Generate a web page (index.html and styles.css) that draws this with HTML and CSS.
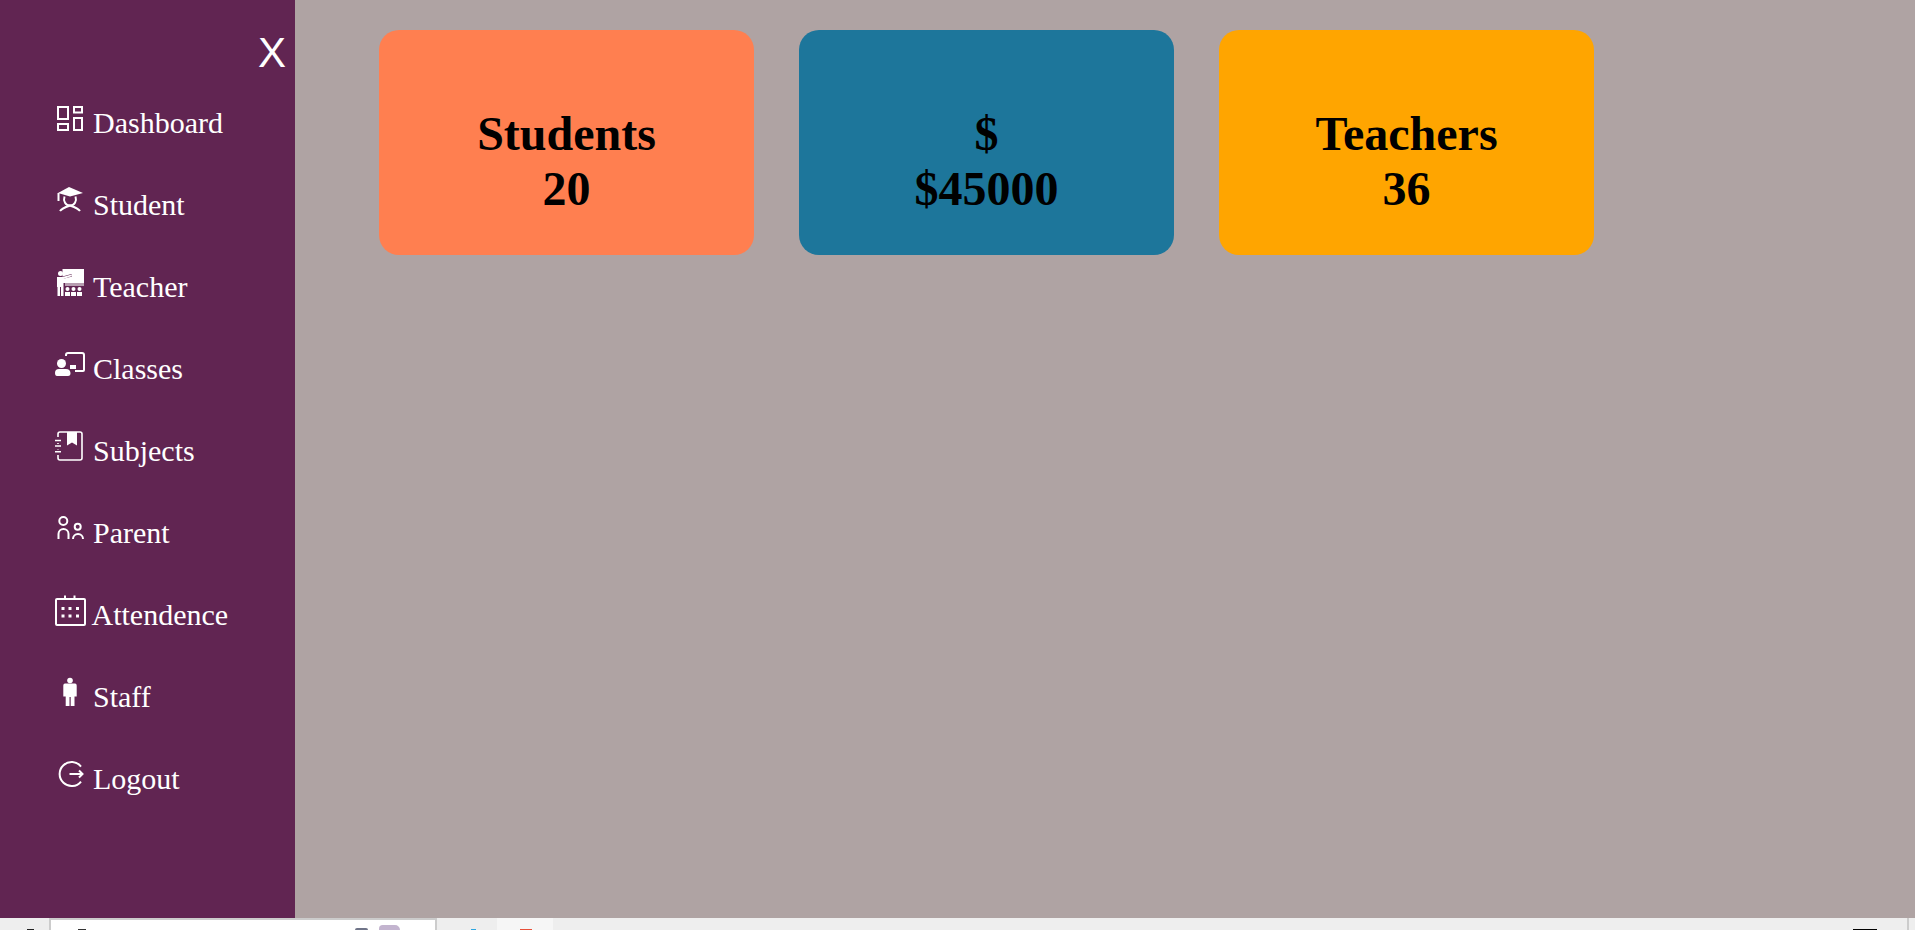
FILE: index.html
```html
<!DOCTYPE html>
<html lang="en">
<head>
<meta charset="utf-8">
<title>Dashboard</title>
<link rel="stylesheet" href="styles.css">
</head>
<body>
<div class="app">
  <aside class="sidebar">
    <div class="close">X</div>
    <nav class="nav">
      <a class="nav-item">
        <svg class="nav-icon" viewBox="0 0 43 34"><rect class="ln" x="8" y="1" width="10" height="12"/><rect class="ln" x="24" y="1" width="8" height="5.5"/><rect class="ln" x="8" y="18" width="10" height="6"/><rect class="ln" x="24" y="12" width="8" height="12"/></svg>
        <span>Dashboard</span>
      </a>
      <a class="nav-item">
        <svg class="nav-icon" viewBox="0 0 43 34"><path class="fl" d="M19 -1 33 5 20 8.500 8 5Z"/><path class="ln" d="M8.500 5V13"/><path class="ln" d="M14.500 8.500C13 13 15.500 17.500 20 17.500S27 13 25.500 8.500"/><path class="ln" d="M10 23C12 20 17 18.500 20 17.500C23 18.500 28 20 30 23"/></svg>
        <span>Student</span>
      </a>
      <a class="nav-item">
        <svg class="nav-icon" viewBox="0 0 43 34"><path class="fl" d="M12.500 -1H34V13H12.500V9L22 6.500 21.500 4 12.500 6.500Z"/><rect class="dim" x="15" y="13" width="19" height="3"/><circle class="fl" cx="10.500" cy="3.500" r="2.500"/><path class="fl" d="M7 7 12.500 7 21.500 4.500 22 6 13.500 9V26H11V17H10V26H7.500V17H7Z"/><circle class="fl" cx="17.500" cy="19" r="2"/><circle class="fl" cx="23.500" cy="19" r="2"/><circle class="fl" cx="29.500" cy="19" r="2"/><path class="fl" d="M15 22H20V26H15ZM21 22H26V26H21ZM27 22H32V26H27Z"/></svg>
        <span>Teacher</span>
      </a>
      <a class="nav-item">
        <svg class="nav-icon" viewBox="0 0 43 34"><path class="ln" d="M16 4V3Q16 1 18 1H32Q34 1 34 3V18Q34 19 33 19H25"/><path class="fl" d="M20 13H26V17H20Z"/><circle class="fl" cx="11.500" cy="11.500" r="4.500"/><path class="fl" d="M5 21Q5 17 9 17H16Q20 17 20.500 21Q20.500 24 18 24H7Q5 24 5 21Z"/></svg>
        <span>Classes</span>
      </a>
      <a class="nav-item">
        <svg class="nav-icon" viewBox="0 0 43 34"><path class="thin" d="M8 3V0Q8 -2 10 -2H30Q32 -2 32 0V24Q32 26 30 26H10Q8 26 8 24V21"/><path class="thin" d="M8 9V10M8 15V15.500"/><path class="fl" d="M17 -2H27V11.500L22 8.500 17 11.500Z"/><path class="thin" d="M5 6.500H11M5 12H11M5 17.700H11"/></svg>
        <span>Subjects</span>
      </a>
      <a class="nav-item">
        <svg class="nav-icon" viewBox="0 0 43 34"><circle class="ln" cx="13.300" cy="5" r="4"/><path class="ln" d="M8.500 23V18A5 5 0 0 1 18.500 18V23"/><circle class="ln" cx="27.700" cy="10.700" r="3"/><path class="ln" d="M23 23A5 5 0 0 1 33 23"/></svg>
        <span>Parent</span>
      </a>
      <a class="nav-item item-tight">
        <svg class="nav-icon" viewBox="0 0 43 34"><rect class="ln" x="6" y="1" width="29" height="26" rx="1"/><path class="ln" d="M15 -2.500V2M24.500 -2.500V2"/><path class="fl" d="M11.500 9H14.500V12H11.500ZM18.500 9H21.500V12H18.500ZM26 9H29V12H26ZM11.500 16.500H14.500V19.500H11.500ZM18.500 16.500H21.500V19.500H18.500ZM26 16.500H29V19.500H26Z"/></svg>
        <span>Attendence</span>
      </a>
      <a class="nav-item">
        <svg class="nav-icon" viewBox="0 0 43 34"><circle class="fl" cx="20" cy="0.500" r="2.800"/><path class="fl" d="M15 3.500H25Q26.700 3.500 26.700 5.500V16.500H24.500V26H20.700V17H19.500V26H15.700V16.500H13.300V5.500Q13.300 3.500 15 3.500Z"/></svg>
        <span>Staff</span>
      </a>
      <a class="nav-item">
        <svg class="nav-icon" viewBox="0 0 43 34"><path class="ln" d="M31 4.500A12 12 0 1 0 31 19.500"/><path class="ln" d="M19.500 12H32M29 8.500 32.500 12 29 15.500"/></svg>
        <span>Logout</span>
      </a>
    </nav>
  </aside>
  <main class="main">
    <div class="card card-coral"><div>Students</div><div>20</div></div>
    <div class="card card-blue"><div>$</div><div>$45000</div></div>
    <div class="card card-orange"><div>Teachers</div><div>36</div></div>
  </main>
</div>
<footer class="taskbar">
  <i class="bit bit-start"></i>
  <div class="search">
    <i class="bit bit-lens"></i>
    <i class="bit bit-gray"></i>
    <i class="bit bit-lilac"></i>
  </div>
  <i class="bit bit-blue"></i>
  <div class="tab"><i class="bit bit-red"></i></div>
  <i class="bit bit-tray"></i>
  <i class="divider"></i>
</footer>
</body>
</html>
```

FILE: styles.css
```css
* {
  box-sizing: border-box;
}

html,
body {
  margin: 0;
  height: 100%;
  overflow: hidden;
}

body {
  display: flex;
  flex-direction: column;
  font-family: "Liberation Serif", "Times New Roman", serif;
  background: #eeeeee;
}

.app {
  display: flex;
  height: 918px;
  flex: none;
}

.sidebar {
  width: 295px;
  flex: none;
  padding-top: 30px;
  background: #612552;
  color: #ffffff;
}

.close {
  height: 46px;
  padding-right: 9px;
  text-align: right;
  font-family: "Liberation Sans", Arial, sans-serif;
  font-size: 42px;
  line-height: 46px;
}

.nav {
  display: flex;
  flex-direction: column;
  gap: 48px;
  margin-top: 30px;
  padding-left: 50px;
}

.nav-item {
  display: flex;
  align-items: flex-start;
  height: 34px;
  font-size: 30px;
  line-height: 34px;
  color: #ffffff;
}

.nav-icon {
  flex: none;
  width: 43px;
  height: 34px;
  overflow: visible;
}

.item-tight span {
  margin-left: -1.5px;
}

.ln,
.thin {
  fill: none;
  stroke: #ffffff;
  stroke-width: 2;
}

.thin {
  stroke-width: 1.6;
}

.fl {
  fill: #ffffff;
}

.dim {
  fill: #b79db0;
}

.main {
  flex: 1;
  display: flex;
  align-items: flex-start;
  gap: 45px;
  padding: 30px 0 0 84px;
  background: #afa3a3;
}

.card {
  width: 375px;
  height: 225px;
  padding-top: 76px;
  border-radius: 20px;
  text-align: center;
  font-size: 48px;
  font-weight: bold;
  color: #000000;
}

.card-coral {
  background: #ff7f50;
}

.card-blue {
  background: #1d769b;
}

.card-orange {
  background: #ffa500;
}

.taskbar {
  display: flex;
  flex: none;
  height: 12px;
  overflow: hidden;
  background: #eeeeee;
}

.search {
  display: flex;
  width: 388px;
  height: 12px;
  margin-left: 15px;
  border: 2px solid #cccccc;
  border-bottom: 0;
  background: #ffffff;
}

.tab {
  display: flex;
  width: 56px;
  height: 12px;
  background: #f6f6f6;
}

.bit {
  display: block;
  flex: none;
  align-self: flex-end;
}

.bit-start {
  width: 7px;
  height: 1px;
  margin-left: 27px;
  margin-top: 11px;
  background: #222222;
}

.bit-lens {
  width: 8px;
  height: 1px;
  margin-left: 27px;
  background: #333333;
}

.bit-gray {
  width: 13px;
  height: 2px;
  margin-left: 269px;
  border-radius: 6px 6px 0 0;
  background: #6f7488;
}

.bit-lilac {
  width: 21px;
  height: 5px;
  margin-left: 11px;
  border-radius: 6px 8px 0 0;
  background: #c3b4cf;
}

.bit-blue {
  width: 5px;
  height: 1px;
  margin-left: 34px;
  margin-top: 11px;
  background: #2ea6e0;
}

.tab {
  margin-left: 21px;
}

.bit-red {
  width: 12px;
  height: 1px;
  margin-left: 23px;
  background: #e8503a;
}

.bit-tray {
  width: 24px;
  height: 1px;
  margin-left: 1300px;
  margin-top: 11px;
  background: #000000;
}

.divider {
  display: block;
  flex: none;
  width: 2px;
  height: 12px;
  margin-left: 30px;
  background: #cccccc;
}
```
